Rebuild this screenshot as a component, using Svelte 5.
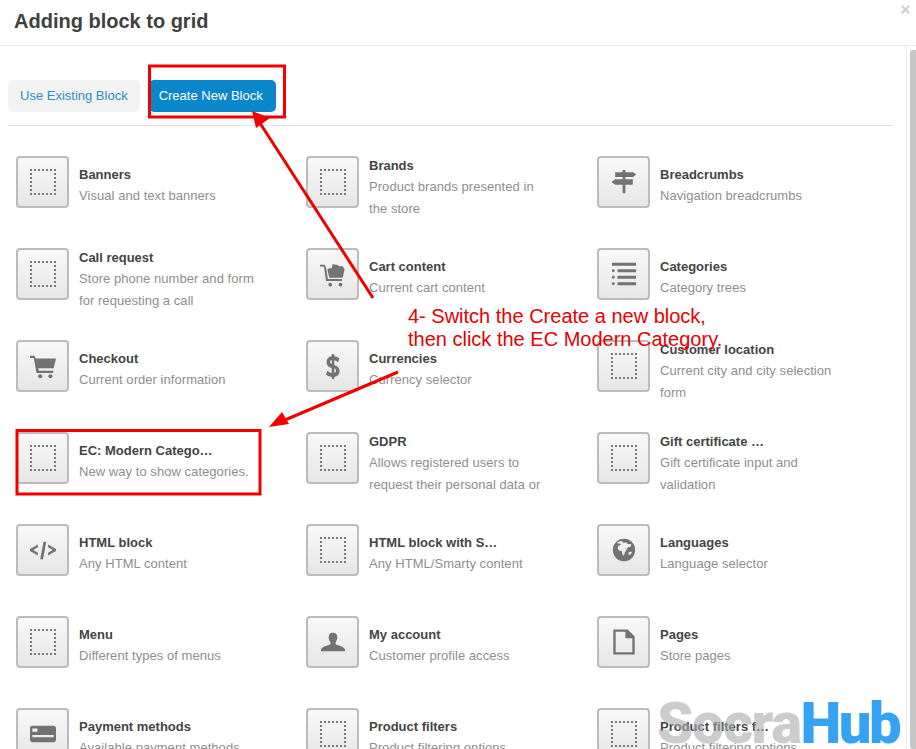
<script>
	const blocks = [
		{ name: 'Banners', desc: 'Visual and text banners' },
		{ name: 'Brands', desc: 'Product brands presented in the store' },
		{ name: 'Breadcrumbs', desc: 'Navigation breadcrumbs', icon: 'signs' },
		{ name: 'Call request', desc: 'Store phone number and form for requesting a call' },
		{ name: 'Cart content', desc: 'Current cart content', icon: 'cart-full' },
		{ name: 'Categories', desc: 'Category trees', icon: 'list' },
		{ name: 'Checkout', desc: 'Current order information', icon: 'cart' },
		{ name: 'Currencies', desc: 'Currency selector', icon: 'dollar' },
		{ name: 'Customer location', desc: 'Current city and city selection form' },
		{ name: 'EC: Modern Catego…', desc: 'New way to show categories.' },
		{ name: 'GDPR', desc: 'Allows registered users to request their personal data or' },
		{ name: 'Gift certificate …', desc: 'Gift certificate input and validation' },
		{ name: 'HTML block', desc: 'Any HTML content', icon: 'code' },
		{ name: 'HTML block with S…', desc: 'Any HTML/Smarty content' },
		{ name: 'Languages', desc: 'Language selector', icon: 'globe' },
		{ name: 'Menu', desc: 'Different types of menus' },
		{ name: 'My account', desc: 'Customer profile access', icon: 'user' },
		{ name: 'Pages', desc: 'Store pages', icon: 'page' },
		{ name: 'Payment methods', desc: 'Available payment methods', icon: 'card' },
		{ name: 'Product filters', desc: 'Product filtering options' },
		{ name: 'Product filters f…', desc: 'Product filtering options,' }
	];
</script>

<div class="dialog">
	<header class="head">
		<h1>Adding block to grid</h1>
		<svg class="close" viewBox="0 0 10 10"><path d="M1.6 0 5 3.2 8.4 0 10 1.6 6.8 5 10 8.4 8.4 10 5 6.8 1.6 10 0 8.4 3.2 5 0 1.6z" /></svg>
	</header>

	<div class="body">
		<div class="tabs">
			<button class="tab">Use Existing Block</button>
			<button class="tab active">Create New Block</button>
		</div>

		<div class="grid">
			{#each blocks as b}
				<div class="item">
					<div class="thumb">
						{#if !b.icon}
							<span class="dots"></span>
						{:else}
							<svg viewBox="0 0 28 28" class="ico">
								{#if b.icon === 'signs'}
									<path d="M12.500 1h3v2.500h8.500l3 2.500-3 2.500h-8.500v2.500h8v6h-8v9h-3v-9h-8l-4-3 4-3h8v-2.500h-8v-5h8z" />
								{:else if b.icon === 'cart-full'}
									<path d="M0 4h5l1.500 3 2 12.500h15v2h-17l-2-14-.8-1.500h-3.700z" />
									<path d="M8 9.500c1-2 3-2 4.500-1.500l1-4.500 4.500.5c2 .5 3 2.500 6 1.500l2.500 3-2 9.500h-14.500z" />
									<circle cx="11" cy="25.500" r="2" /><circle cx="22" cy="25.500" r="2" />
								{:else if b.icon === 'cart'}
									<path d="M0 3h5l1 3h22l-2.500 10.500h-16.500l.4 2.500h15.600v2.500h-18l-2.500-14-.7-2h-3.800z" />
									<circle cx="11" cy="25" r="2.200" /><circle cx="22" cy="25" r="2.200" />
								{:else if b.icon === 'list'}
									<path d="M1 2h26v3h-26zM7 9h20v3h-20zM7 16h20v3h-20zM7 23h20v3h-20z" />
									<circle cx="2.500" cy="10.500" r="1.500" /><circle cx="2.500" cy="17.500" r="1.500" /><circle cx="2.500" cy="24.500" r="1.500" />
								{:else if b.icon === 'dollar'}
									<g transform="translate(2.800 0) scale(.8 1)">
										<path fill-rule="evenodd" d="M12.300 1h3.400v2.600c3 .3 5.300 1.300 6.800 2.400l-1.800 3.900c-1.500-1-3.100-1.700-5-2v5c4.500 1.100 7.200 2.800 7.200 6.600 0 3.700-2.700 5.800-7.200 6.300v2.400h-3.400v-2.400c-3.300-.3-5.900-1.400-7.800-2.900l2-3.900c1.700 1.300 3.700 2.200 5.800 2.500v-5.300c-4.500-1.100-7-2.900-7-6.500 0-3.600 2.700-5.700 7-6.100zM12.300 7.500c-1.500.2-2.300 1-2.300 2 0 1 .7 1.700 2.300 2.200zM15.700 16.500v4.700c1.600-.2 2.400-1 2.400-2.300 0-1.100-.8-1.800-2.400-2.400z" />
									</g>
								{:else if b.icon === 'code'}
									<path d="M8.500 8v3l-5 3 5 3v3l-8.500-5v-2zM19.500 8l8.500 5v2l-8.500 5v-3l5-3-5-3zM14.500 5h3l-3.500 19h-3z" />
								{:else if b.icon === 'globe'}
									<path fill-rule="evenodd" d="M14 2a12 12 0 1 0 0 24 12 12 0 0 0 0-24zM6 6.500c2-1.500 4-2 6-1.800l1.500 1.800 3-.8 1.500 1.800 4 .3-1 3-3 .3-1 2-2 3.200-1 3.500-1.500-.3-1-4.500-3-.5-1.500-2.500 1-2.500 2-.8 1-1.500-3-.2zM19 16.500l2.500-1 1 1.500-2 2.500-2-.8z" />
								{:else if b.icon === 'user'}
									<path d="M14 4c3.200 0 4.700 2.200 4.700 5 0 2.300-.9 4-1.900 5.300v2.200c2 1.300 8 1.800 10.200 5.500v2h-26v-2c2.200-3.700 8.200-4.200 10.200-5.500v-2.200c-1-1.300-1.900-3-1.900-5.300 0-2.800 1.500-5 4.700-5z" />
								{:else if b.icon === 'page'}
									<path fill-rule="evenodd" d="M2.500 .5h15.500l7.500 7.500v19.500h-23zM5 3v22h18v-15h-7.500v-7z" />
								{:else if b.icon === 'card'}
									<path fill-rule="evenodd" d="M3 5h22a3 3 0 0 1 3 3v12a3 3 0 0 1-3 3h-22a3 3 0 0 1-3-3v-12a3 3 0 0 1 3-3zM2.500 8v3.500h5.500v-3.500zM2.500 15v2.500h23v-2.500z" />
								{/if}
							</svg>
						{/if}
					</div>
					<div class="text">
						<div class="name">{b.name}</div>
						<div class="desc">{b.desc}</div>
					</div>
				</div>
			{/each}
		</div>
	</div>

	<div class="scrollbar"></div>

	<!-- annotation layer drawn over the screenshot -->
	<svg class="marks" viewBox="0 0 916 749">
		<rect x="149.500" y="66" width="135" height="51" />
		<rect x="17" y="430.500" width="243" height="63.500" />
		<line x1="373" y1="298" x2="258" y2="120" />
		<path class="fill" d="M252 111 270 118 256 128z" />
		<line x1="398" y1="372" x2="285" y2="420" />
		<path class="fill" d="M269 427 282 412 289 424z" />
	</svg>
	<div class="note">4- Switch the Create a new block,<br />then click the EC Modern Category.</div>
	<div class="brand"><span class="socra">Socra</span><span class="hub">Hub</span></div>
</div>

<style>
	:global(body) {
		margin: 0;
		background: #fff;
	}
	.dialog {
		position: relative;
		width: 916px;
		height: 749px;
		overflow: hidden;
		background: #fff;
		font-family: "Liberation Sans", Arial, sans-serif;
		color: #404040;
	}
	.head {
		height: 46px;
		box-sizing: border-box;
		border-bottom: 1px solid #e8e8e8;
		padding: 9px 14px 0;
	}
	h1 {
		margin: 0;
		font-size: 20px;
		line-height: 24px;
		font-weight: bold;
	}
	.close {
		position: absolute;
		top: 5px;
		right: 6px;
		width: 9px;
		height: 9px;
		fill: #cfcfcf;
	}
	.body {
		padding: 34px 23px 0 8px;
	}
	.tabs {
		display: flex;
		gap: 9px;
		padding-bottom: 13px;
		border-bottom: 1px solid #e4e4e4;
	}
	.tab {
		height: 32px;
		padding: 0 12px 2px;
		border: 0;
		border-radius: 5px;
		background: #f3f3f3;
		color: #2d8fc4;
		font: 13px "Liberation Sans", Arial, sans-serif;
		white-space: nowrap;
	}
	.tab.active {
		padding: 0 13px 2px 10px;
		background: #0a87cb;
		color: #fff;
	}
	.grid {
		display: grid;
		grid-template-columns: 290px 291px 1fr;
		grid-auto-rows: 62px;
		row-gap: 30px;
		padding: 30px 0 0 8px;
	}
	.item {
		display: flex;
		align-items: flex-start;
		gap: 10px;
	}
	.thumb {
		flex: none;
		width: 53px;
		height: 52px;
		box-sizing: border-box;
		border: 2px solid #bcbcbc;
		border-radius: 4px;
		background: linear-gradient(#f8f8f8, #e6e6e6);
		display: flex;
		align-items: center;
		justify-content: center;
	}
	.dots {
		width: 26px;
		height: 26px;
		box-sizing: border-box;
		border: 2px dotted #7a7a7a;
	}
	.ico {
		width: 26px;
		height: 26px;
		fill: #727272;
	}
	.text {
		align-self: center;
		width: 182px;
		min-height: 47px;
	}
	.name {
		font-size: 13px;
		font-weight: bold;
		line-height: 21px;
		color: #444;
	}
	.desc {
		font-size: 13px;
		line-height: 22px;
		letter-spacing: 0.05px;
		color: #8e8e8e;
	}
	.scrollbar {
		position: absolute;
		top: 46px;
		bottom: 0;
		left: 906px;
		right: 0;
		border-left: 1px solid #ececec;
	}
	.scrollbar::after {
		content: "";
		position: absolute;
		top: 4px;
		bottom: 0;
		left: 3px;
		right: 0;
		border-radius: 3px 0 0 3px;
		background: #c6c6c6;
	}
	.marks {
		position: absolute;
		inset: 0;
		width: 916px;
		height: 749px;
		fill: none;
		stroke: #f00000;
		stroke-width: 3;
	}
	.marks .fill {
		fill: #f00000;
		stroke: none;
	}
	.note {
		position: absolute;
		left: 408px;
		top: 305px;
		font-size: 20px;
		line-height: 23px;
		color: #e60000;
		white-space: nowrap;
	}
	.brand {
		position: absolute;
		left: 657px;
		top: 682px;
		font-family: Roboto, sans-serif;
		font-weight: 900;
		font-size: 58px;
		line-height: 82px;
		letter-spacing: -1.500px;
		white-space: nowrap;
	}
	.socra {
		color: rgba(170, 170, 170, 0.6);
	}
	.hub {
		letter-spacing: -2.500px;
		color: #35a2f4;
	}
</style>
